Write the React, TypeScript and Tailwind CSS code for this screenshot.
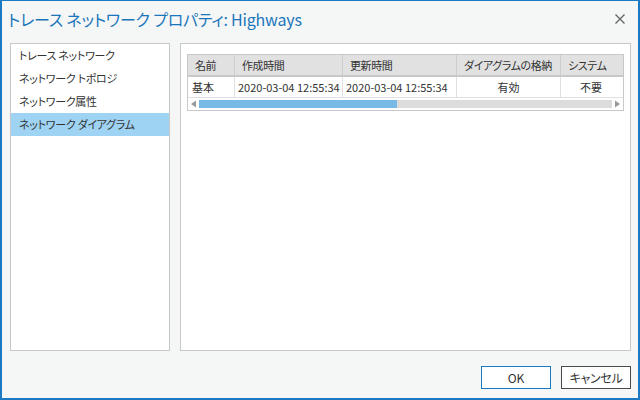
import React from 'react';

const jp = "font-['Noto_Sans_CJK_JP','Noto_Sans',sans-serif] [font-feature-settings:'palt']";

const navItems = ['トレース ネットワーク', 'ネットワーク トポロジ', 'ネットワーク属性', 'ネットワーク ダイアグラム'];

const columns = [
  { key: 'name', label: '名前', width: 'w-[47px]' },
  { key: 'created', label: '作成時間', width: 'w-[108px]' },
  { key: 'updated', label: '更新時間', width: 'w-[114px]' },
  { key: 'store', label: 'ダイアグラムの格納', width: 'w-[104px]' },
  { key: 'system', label: 'システム', width: 'flex-1' },
];

export default function App() {
  const selected = 3;

  return (
    <div className={`w-[640px] h-[400px] bg-[#f5f7f7] border-t border-x-2 border-b-2 border-[#1c79c4] flex flex-col ${jp} text-[11px] text-[#333]`}>
      {/* title bar */}
      <div className="h-[38px] shrink-0 flex items-center justify-between pl-[6px] pr-[10px] pb-[3px]">
        <div className="text-[16px] text-[#1b75bb] leading-none whitespace-nowrap tracking-[-0.2px]">トレース ネットワーク プロパティ: Highways</div>
        <svg width="12" height="12" viewBox="0 0 12 12" className="mr-[2px]">
          <path d="M1.5 1.5 L10.5 10.5 M10.5 1.5 L1.5 10.5" stroke="#666" strokeWidth="1.4" />
        </svg>
      </div>

      {/* body */}
      <div className="flex shrink-0 gap-[10px] pl-[8px] pr-[7px] pt-[4px] h-[312px]">
        <div className="w-[160px] bg-white border border-[#c8c8c8] flex flex-col">
          {navItems.map((item, i) => (
            <div
              key={item}
              className={`h-[23px] flex items-center pl-[8px] whitespace-nowrap tracking-[-0.3px] ${i === selected ? 'bg-[#9fd3f3]' : ''}`}
            >
              {item}
            </div>
          ))}
        </div>

        <div className="flex-1 bg-white border border-[#c8c8c8] pt-[10px] px-[6px]">
          <div className="border border-[#c8c8c8]">
            {/* header */}
            <div className="flex h-[22px] bg-[#e1e1e1] border-b-2 border-[#c8c8c8]">
              {columns.map((c, i) => (
                <div
                  key={c.key}
                  className={`${c.width} flex items-center pl-[7px] whitespace-nowrap overflow-hidden tracking-[-0.4px] ${i < columns.length - 1 ? 'border-r border-[#cdcdcd]' : ''}`}
                >
                  {c.label}
                </div>
              ))}
            </div>
            {/* row */}
            <div className="flex h-[21px] border-b border-[#e0e0e0] whitespace-nowrap">
              <div className="w-[47px] flex items-center pl-[4px] border-r border-[#e0e0e0]">基本</div>
              <div className="w-[108px] flex items-center pl-[3px] border-r border-[#e0e0e0] overflow-hidden">2020-03-04 12:55:34</div>
              <div className="w-[114px] flex items-center pl-[3px] border-r border-[#e0e0e0] overflow-hidden">2020-03-04 12:55:34</div>
              <div className="w-[104px] flex items-center justify-center border-r border-[#e0e0e0]">有効</div>
              <div className="flex-1 flex items-center justify-center pr-[2px]">不要</div>
            </div>
            {/* horizontal scrollbar */}
            <div className="flex items-center h-[12px] px-[1px]">
              <svg width="10" height="8" viewBox="0 0 10 8" className="shrink-0">
                <path d="M7 0.5 L2 4 L7 7.5 Z" fill="#9a9a9a" />
              </svg>
              <div className="flex-1 h-[8px] bg-[#dcdcdc] flex">
                <div className="w-[198px] h-full bg-[#78b9e6]" />
              </div>
              <svg width="10" height="8" viewBox="0 0 10 8" className="shrink-0">
                <path d="M3 0.5 L8 4 L3 7.5 Z" fill="#9a9a9a" />
              </svg>
            </div>
          </div>
        </div>
      </div>

      {/* footer */}
      <div className="flex justify-end gap-[10px] pr-[7px] pt-[15px] text-[12px]">
        <button className="w-[70px] h-[23px] border border-[#1c79c4] bg-white flex items-center justify-center">OK</button>
        <button className="w-[70px] h-[23px] border border-[#4a4a4a] bg-white flex items-center justify-center tracking-[-0.3px]">キャンセル</button>
      </div>
    </div>
  );
}
